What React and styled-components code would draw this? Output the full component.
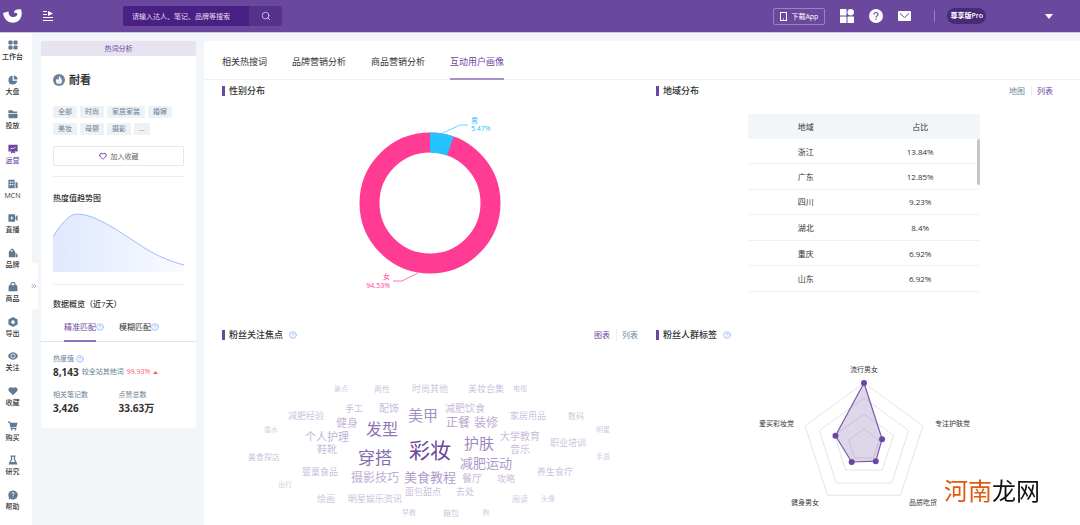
import React, { useState } from "react";
import styled, { createGlobalStyle } from "styled-components";
import { ChevronsRight, CircleHelp, Heart, Search } from "lucide-react";

const navItems = [
  { label: "工作台", icon: "grid" },
  { label: "大盘", icon: "pie" },
  { label: "投放", icon: "folder" },
  { label: "运营", icon: "board" },
  { label: "MCN", icon: "building" },
  { label: "直播", icon: "video" },
  { label: "品牌", icon: "tag" },
  { label: "商品", icon: "bag" },
  { label: "导出", icon: "hex" },
  { label: "关注", icon: "eye" },
  { label: "收藏", icon: "heart" },
  { label: "购买", icon: "cart" },
  { label: "研究", icon: "flask" },
  { label: "帮助", icon: "help" },
];

const icons = {
  grid: (
    <>
      <rect x="1" y="1" width="10" height="10" rx="3" />
      <rect x="13" y="1" width="10" height="10" rx="3" />
      <rect x="1" y="13" width="10" height="10" rx="3" />
      <rect x="13" y="13" width="10" height="10" rx="3" />
    </>
  ),
  pie: (
    <>
      <path d="M11 2a10.500 10.500 0 1 0 11 12H11z" />
      <path d="M14 1v10h9A10 10 0 0 0 14 1z" />
    </>
  ),
  folder: (
    <>
      <path d="M1 3h9l3 3h9v4H1z" />
      <path d="M1 12h22v8a2 2 0 0 1-2 2H3a2 2 0 0 1-2-2z" />
    </>
  ),
  board: (
    <>
      <path d="M1 2h22v16h-8l3 4h-4l-2-2-2 2H6l3-4H1z" />
      <path d="M6 13l4-4 3 3 5-5" fill="none" stroke="#fff" strokeWidth="2" />
    </>
  ),
  building: (
    <>
      <path
        fillRule="evenodd"
        d="M1 2h15v20H1zM4 6v3h4V6zm6 0v3h3V6zM4 12v3h4v-3zm6 0v3h3v-3z"
      />
      <path d="M18 8h5v14h-5z" />
    </>
  ),
  video: (
    <>
      <path fillRule="evenodd" d="M1 3h16v18H1zM7 8v8l6-4z" />
      <path d="M18 9l5-4v14l-5-4z" />
    </>
  ),
  tag: (
    <>
      <path
        fillRule="evenodd"
        d="M2 9l6-7h4l5 7v13H2zM9 5a2 2 0 1 0 .1 0z"
      />
      <path d="M18 10l5 7v5h-5z" />
    </>
  ),
  bag: (
    <>
      <path d="M2 8h20l1 14H1z" />
      <path d="M7 12V6a5 5 0 0 1 10 0v6" fill="none" stroke="currentColor" strokeWidth="3" />
    </>
  ),
  hex: <path fillRule="evenodd" d="M12 0l11 6v12l-11 6-11-6V6zM12 7l-4 3v5l4 2 4-2v-5z" />,
  eye: (
    <>
      <path d="M0 12C5 0 19 0 24 12 19 24 5 24 0 12z" />
      <circle cx="12" cy="12" r="5" fill="none" stroke="#fff" strokeWidth="2" />
    </>
  ),
  heart: <path d="M12 22L2 12C-2 6 6-1 12 5c6-6 14 1 10 7z" />,
  cart: (
    <>
      <path d="M0 1h5l1 3h17l-3 11H8l1 2h11v2H7L3 4H0z" />
      <circle cx="9" cy="21" r="2" />
      <circle cx="18" cy="21" r="2" />
    </>
  ),
  flask: <path fillRule="evenodd" d="M6 1h12v3h-1v6l6 13H1L7 10V4H6zM10 4v7l-3 6h10l-3-6V4z" />,
  help: (
    <>
      <path d="M12 1a11 11 0 1 1-6 20l-4 2v-6A11 11 0 0 1 12 1z" />
      <path
        d="M9 9c0-4 6-4 6 0 0 2-3 2-3 5m0 2v2"
        fill="none"
        stroke="#fff"
        strokeWidth="2"
      />
    </>
  ),
};

const tags = ["全部", "时尚", "家居家装", "婚嫁", "美妆", "母婴", "摄影", "..."];
const pageTabs = ["相关热搜词", "品牌营销分析", "商品营销分析", "互动用户画像"];

const regions = [
  ["浙江", "13.84%"],
  ["广东", "12.85%"],
  ["四川", "9.23%"],
  ["湖北", "8.4%"],
  ["重庆", "6.92%"],
  ["山东", "6.92%"],
];

// word, x, y, size, opacity
const words = [
  ["景点", 119, 46, 7, 0.3],
  ["两性", 160, 46, 8, 0.32],
  ["时尚其他", 208, 46, 9, 0.32],
  ["美妆合集", 264, 46, 9, 0.34],
  ["电视", 298, 46, 7, 0.32],
  ["手工", 132, 66, 9, 0.35],
  ["配饰", 167, 66, 10, 0.38],
  ["美甲", 201, 73, 15, 0.6],
  ["减肥饮食", 243, 66, 10, 0.36],
  ["家居用品", 306, 73, 9, 0.34],
  ["数码", 354, 73, 8, 0.32],
  ["减肥经验", 84, 73, 9, 0.34],
  ["健身", 125, 80, 11, 0.4],
  ["发型", 160, 87, 16, 0.75],
  ["正餐", 236, 80, 12, 0.5],
  ["装修", 264, 80, 12, 0.45],
  ["香水", 49, 87, 7, 0.28],
  ["个人护理", 105, 94, 11, 0.42],
  ["大学教育", 298, 94, 10, 0.36],
  ["明星", 381, 87, 7, 0.3],
  ["鞋靴", 105, 107, 10, 0.36],
  ["彩妆", 208, 108, 21, 1],
  ["护肤", 257, 101, 15, 0.65],
  ["音乐", 298, 107, 10, 0.36],
  ["职业培训", 346, 100, 9, 0.34],
  ["穿搭", 153, 115, 17, 0.8],
  ["美食探店", 42, 114, 8, 0.32],
  ["减肥运动", 264, 121, 13, 0.55],
  ["手游", 381, 114, 7, 0.3],
  ["婴童食品", 98, 129, 9, 0.36],
  ["摄影技巧", 153, 135, 12, 0.45],
  ["美食教程", 208, 135, 13, 0.55],
  ["餐厅", 250, 136, 10, 0.38],
  ["攻略", 284, 136, 9, 0.36],
  ["养生食疗", 333, 129, 9, 0.34],
  ["出行", 63, 142, 7, 0.3],
  ["绘画", 104, 156, 9, 0.32],
  ["明星娱乐资讯", 153, 156, 9, 0.34],
  ["面包甜点", 201, 149, 9, 0.34],
  ["去处", 243, 149, 9, 0.34],
  ["阅读", 298, 156, 8, 0.32],
  ["头像", 326, 156, 7, 0.3],
  ["早教", 187, 170, 7, 0.3],
  ["箱包", 229, 170, 8, 0.32],
  ["狗", 264, 170, 7, 0.3],
];

const radarPoint = (i, r) => {
  const a = (i * 72 * Math.PI) / 180;
  return [208 + r * Math.sin(a), 103 - r * Math.cos(a)];
};
const radarLine = (values) => values.map((r, i) => radarPoint(i, r).join(",")).join(" ");
const radarValues = [62, 19, 20, 21, 30];

const NavIcon = ({ name }) => (
  <svg viewBox="0 0 24 24" width="10" height="10" fill="currentColor">
    {icons[name]}
  </svg>
);

const SectionTitle = ({ title, help, options, active, inset }) => (
  <SectionHead $inset={inset}>
    <h2>{title}</h2>
    {help && <HelpIcon size={8} />}
    {options && (
      <Toggle>
        {options.map((o) => (
          <button type="button" key={o} className={o === active ? "active" : ""}>
            {o}
          </button>
        ))}
      </Toggle>
    )}
  </SectionHead>
);

const TrendChart = () => (
  <TrendSvg viewBox="0 0 131 60" preserveAspectRatio="none">
    <defs>
      <linearGradient id="trend" x1="0" x2="1" y1="0" y2="0">
        <stop offset="0" stopColor="#dfe8fd" />
        <stop offset="1" stopColor="#fafbff" />
      </linearGradient>
    </defs>
    <path
      d="M0 25C8 11 16 4 21 2.500C28 1 38 4 48 9C60 15 70 22 84 31C98 41 115 49 131 53V60H0z"
      fill="url(#trend)"
    />
    <path
      d="M0 25C8 11 16 4 21 2.500C28 1 38 4 48 9C60 15 70 22 84 31C98 41 115 49 131 53"
      fill="none"
      stroke="#9dbcf9"
    />
  </TrendSvg>
);

const GenderChart = () => (
  <ChartSvg viewBox="0 0 416 220">
    <g fill="none" strokeWidth="20" transform="rotate(-90 208 105)">
      <circle cx="208" cy="105" r="60.500" stroke="#ff3b93" />
      <circle
        cx="208"
        cy="105"
        r="60.500"
        stroke="#23c3ff"
        pathLength="100"
        strokeDasharray="5.47 94.53"
      />
    </g>
    <path d="M221 35l17-8h8" fill="none" stroke="#23c3ff" strokeWidth="0.700" />
    <path d="M196 175l-16 8h-9" fill="none" stroke="#ff3b93" strokeWidth="0.700" />
    <g fontSize="7" fill="#23c3ff">
      <text x="249" y="25">男</text>
      <text x="249" y="33">5.47%</text>
    </g>
    <g fontSize="7" fill="#ff3b93" textAnchor="end">
      <text x="168" y="181">女</text>
      <text x="168" y="190">94.53%</text>
    </g>
  </ChartSvg>
);

const WordCloud = () => (
  <ChartSvg viewBox="0 0 416 182">
    <g fill="#6a479d" textAnchor="middle">
      {words.map(([word, x, y, size, opacity]) => (
        <text key={word} x={x} y={y} fontSize={size} opacity={opacity} dominantBaseline="central">
          {word}
        </text>
      ))}
    </g>
  </ChartSvg>
);

const RadarChart = () => (
  <ChartSvg viewBox="0 0 416 182">
    <g fill="none" stroke="#e4e4e4">
      {[62, 47, 31, 16].map((r) => (
        <polygon key={r} points={radarLine([r, r, r, r, r])} />
      ))}
    </g>
    <polygon
      points={radarLine(radarValues)}
      fill="#6b489f"
      fillOpacity="0.22"
      stroke="#7a59ad"
      strokeWidth="1.200"
    />
    {radarValues.map((r, i) => {
      const [x, y] = radarPoint(i, r);
      return <circle key={i} cx={x} cy={y} r="3" fill="#6b489f" />;
    })}
    <g fontSize="7" fill="#333" dominantBaseline="central">
      <text x="208" y="27" textAnchor="middle">流行男女</text>
      <text x="279" y="81">专注护肤党</text>
      <text x="253" y="160">品质吃货</text>
      <text x="163" y="160" textAnchor="end">健身男女</text>
      <text x="138" y="81" textAnchor="end">爱买彩妆党</text>
    </g>
  </ChartSvg>
);

const App = () => {
  const [tab, setTab] = useState("互动用户画像");

  return (
    <>
      <GlobalStyle />
      <Header>
        <Logo viewBox="0 0 20 14" width="20" height="14" aria-label="logo">
          <path
            d="M0 4L5.500 2.500C5.500 6.500 8 8.200 10.500 8C13 7.800 14.600 6 14.500 4.500L11 3.500C11 1 14 0 18 .3C20.500 8 16 13.700 10 13.700C4.500 13.700 1 10 0 4z"
            fill="#fff"
          />
        </Logo>
        <MenuButton type="button" aria-label="菜单">
          <svg viewBox="0 0 10 10" width="10" height="10" fill="#fff">
            <path d="M0 0h4v1H0zM0 3h4v1H0zM0 6h10v1H0zM0 9h10v1H0zM5 0l5 2.500L5 5z" />
          </svg>
        </MenuButton>
        <SearchBox>
          <input type="text" aria-label="搜索" placeholder="请输入达人、笔记、品牌等搜索" />
          <button type="button" aria-label="搜索">
            <Search size={10} />
          </button>
        </SearchBox>
        <HeaderRight>
          <DownloadButton type="button">
            <svg viewBox="0 0 7 9" width="7" height="9" fill="none" stroke="#fff">
              <rect x="0.500" y="0.500" width="6" height="8" />
              <path d="M3 7h1" />
            </svg>
            下载App
          </DownloadButton>
          <IconButton type="button" aria-label="应用">
            <svg viewBox="0 0 14 14" width="14" height="14" fill="#fff">
              <rect width="6.500" height="6.500" rx="0.500" />
              <circle cx="10.700" cy="3.300" r="3.200" />
              <rect y="7.500" width="6.500" height="6.500" rx="0.500" />
              <rect x="7.500" y="7.500" width="6.500" height="6.500" rx="0.500" />
            </svg>
          </IconButton>
          <IconButton type="button" aria-label="帮助">
            <svg viewBox="0 0 14 14" width="14" height="14">
              <circle cx="7" cy="7" r="7" fill="#fff" />
              <path
                d="M5 5.500c0-2.700 4-2.700 4 0 0 1.400-2 1.400-2 3m0 1v1.300"
                fill="none"
                stroke="#6a489e"
                strokeWidth="1.200"
              />
            </svg>
          </IconButton>
          <IconButton type="button" aria-label="消息">
            <svg viewBox="0 0 14 14" width="14" height="14">
              <rect y="2" width="13" height="10" rx="1" fill="#fff" />
              <path d="M2 4.500l4.500 4 4.500-4" fill="none" stroke="#6a489e" />
            </svg>
          </IconButton>
          <Divider />
          <Plan>尊享版Pro</Plan>
          <IconButton type="button" aria-label="账户">
            <svg viewBox="0 0 8 5" width="8" height="5" fill="#fff">
              <path d="M0 0h8L4 5z" />
            </svg>
          </IconButton>
        </HeaderRight>
      </Header>

      <Body>
        <Nav>
          {navItems.map((item) => (
            <a href="#" key={item.label} className={item.label === "运营" ? "active" : ""}>
              <NavIcon name={item.icon} />
              <span>{item.label}</span>
            </a>
          ))}
          <Collapse type="button" aria-label="展开">
            <ChevronsRight size={8} />
          </Collapse>
        </Nav>

        <Content>
          <Side>
            <Banner>热词分析</Banner>
            <SideBlock>
              <Keyword>
                <svg viewBox="0 0 24 24" width="12" height="12">
                  <circle cx="12" cy="12" r="12" fill="#6b8299" />
                  <path
                    d="M12 3c1 4 6 6 6 11a6 6 0 0 1-12 0c0-2 1-4 3-5 0 2 0 3 1 3 2-2 2-5 2-9z"
                    fill="#fff"
                  />
                  <path d="M12 13c1 2 3 3 2 6h-4c-1-2 1-3 2-6z" fill="#d5dde5" />
                </svg>
                <h1>耐看</h1>
              </Keyword>
              <Tags>
                {tags.map((t) => (
                  <span key={t}>{t}</span>
                ))}
              </Tags>
              <Favorite type="button">
                <Heart size={8} strokeWidth={3} />
                加入收藏
              </Favorite>
              <Line />
              <SideTitle $top={15}>热度值趋势图</SideTitle>
              <TrendChart />
              <Line />
              <SideTitle $top={13}>数据概览（近7天）</SideTitle>
            </SideBlock>
            <MatchTabs>
              <button type="button" className="active">
                <span>精准匹配</span>
                <HelpIcon size={8} />
              </button>
              <button type="button">
                <span>模糊匹配</span>
                <HelpIcon size={8} />
              </button>
            </MatchTabs>
            <Stats>
              <Stat $wide>
                <dt>
                  热度值 <HelpIcon size={8} />
                </dt>
                <dd>
                  8,143
                  <small>较全站其他词</small>
                  <Rise>99.93%</Rise>
                  <svg viewBox="0 0 5 3" width="5" height="3" fill="#ff5a5a">
                    <path d="M0 3L2.500 0 5 3z" />
                  </svg>
                </dd>
              </Stat>
              <Stat>
                <dt>相关笔记数</dt>
                <dd>3,426</dd>
              </Stat>
              <Stat>
                <dt>点赞总数</dt>
                <dd>33.63万</dd>
              </Stat>
            </Stats>
          </Side>

          <Main>
            <PageTabs>
              {pageTabs.map((t) => (
                <button
                  type="button"
                  key={t}
                  className={t === tab ? "active" : ""}
                  onClick={() => setTab(t)}
                >
                  {t}
                </button>
              ))}
            </PageTabs>
            <Sections>
              <section>
                <SectionTitle title="性别分布" />
                <GenderChart />
              </section>
              <section>
                <SectionTitle title="地域分布" options={["地图", "列表"]} active="列表" inset />
                <TableWrap>
                  <Table>
                    <thead>
                      <tr>
                        <th>地域</th>
                        <th>占比</th>
                      </tr>
                    </thead>
                    <tbody>
                      {regions.map(([name, share]) => (
                        <tr key={name}>
                          <td>{name}</td>
                          <td>{share}</td>
                        </tr>
                      ))}
                    </tbody>
                  </Table>
                  <Thumb />
                </TableWrap>
              </section>
              <section>
                <SectionTitle title="粉丝关注焦点" help options={["图表", "列表"]} active="图表" />
                <WordCloud />
              </section>
              <section>
                <SectionTitle title="粉丝人群标签" help />
                <RadarChart />
              </section>
            </Sections>
          </Main>
        </Content>
      </Body>
      <Watermark>
        <span>河南</span>龙网
      </Watermark>
    </>
  );
};

const GlobalStyle = createGlobalStyle`
  * {
    box-sizing: border-box;
    margin: 0;
    padding: 0;
  }
  body {
    font-family: "Open Sans", "Noto Sans CJK SC", sans-serif;
    font-size: 8px;
    color: #333;
    background: #f3f6f9;
  }
  #root {
    display: flex;
    flex-direction: column;
    min-height: 100vh;
  }
  button, input {
    font: inherit;
    color: inherit;
    border: none;
    background: none;
  }
  button {
    cursor: pointer;
  }
  svg {
    flex: none;
  }
`;

const HelpIcon = styled(CircleHelp)`
  color: #82a7f8;
`;

const Header = styled.header`
  display: flex;
  align-items: center;
  flex: none;
  height: 33px;
  padding: 0 27px 0 3px;
  background: #6a489e;
  border-bottom: 1px solid #cfc6e2;
  color: #fff;
`;

const Logo = styled.svg`
  display: block;
`;

const MenuButton = styled.button`
  display: flex;
  margin-left: 20px;
`;

const SearchBox = styled.div`
  display: flex;
  height: 20px;
  margin-left: 70px;
  border-radius: 2px;
  overflow: hidden;
  font-size: 7px;

  input {
    width: 126px;
    padding: 0 9px;
    background: #4a2085;
    outline: none;
    &::placeholder {
      color: #e3dcee;
      opacity: 1;
    }
  }
  button {
    display: flex;
    align-items: center;
    justify-content: center;
    width: 33px;
    background: #56328c;
    color: #d8cfe6;
  }
`;

const HeaderRight = styled.div`
  display: flex;
  align-items: center;
  margin-left: auto;
`;

const DownloadButton = styled.button`
  display: flex;
  align-items: center;
  gap: 4px;
  height: 17px;
  padding: 0 6px;
  border: 1px solid #9a82c0;
  border-radius: 2px;
  font-size: 7px;
`;

const IconButton = styled.button`
  display: flex;
  margin-left: 15px;
`;

const Divider = styled.span`
  width: 1px;
  height: 12px;
  margin: 0 12px 0 22px;
  background: #9a82c0;
`;

const Plan = styled.span`
  height: 16px;
  margin-right: 44px;
  padding: 0 3px;
  border-radius: 8px;
  background: #482a7a;
  font-size: 7px;
  font-weight: 600;
  line-height: 16px;
`;

const Body = styled.div`
  display: flex;
  flex: 1;
`;

const Nav = styled.nav`
  position: relative;
  display: flex;
  flex-direction: column;
  flex: none;
  width: 32px;
  padding: 1px 0 7px;
  background: #fff;

  a {
    display: flex;
    flex: 1;
    flex-direction: column;
    align-items: center;
    justify-content: center;
    gap: 2px;
    padding-right: 7px;
    color: #5f7a93;
    font-size: 7px;
    font-weight: 500;
    line-height: 10px;
    text-decoration: none;
    white-space: nowrap;
    span {
      color: #333;
    }
    &.active,
    &.active span {
      color: #6b47a3;
    }
  }
`;

const Collapse = styled.button`
  position: absolute;
  top: 230px;
  left: 30px;
  display: flex;
  align-items: center;
  width: 8px;
  height: 46px;
  border-radius: 0 2px 2px 0;
  background: #fff;
  color: #8a6dbb;
`;

const Content = styled.div`
  display: flex;
  flex: 1;
  gap: 8px;
  min-width: 0;
  padding: 8px 0 0 9px;
`;

const Side = styled.aside`
  flex: none;
  align-self: flex-start;
  width: 155px;
  border-radius: 2px;
  background: #fff;
  overflow: hidden;
`;

const Banner = styled.div`
  background: #e8e3f1;
  color: #6b47a3;
  font-size: 7px;
  line-height: 15px;
  text-align: center;
`;

const SideBlock = styled.div`
  padding: 16px 12px 0;
`;

const Keyword = styled.div`
  display: flex;
  align-items: center;
  gap: 4px;
  h1 {
    font-size: 11px;
    font-weight: 700;
    line-height: 16px;
  }
`;

const Tags = styled.div`
  display: flex;
  flex-wrap: wrap;
  gap: 5px 3px;
  margin-top: 18px;
  span {
    padding: 0 5px;
    border-radius: 1px;
    background: #eef2f5;
    color: #667e95;
    font-size: 7px;
    line-height: 12px;
  }
`;

const Favorite = styled.button`
  display: flex;
  align-items: center;
  justify-content: center;
  gap: 4px;
  width: 100%;
  height: 20px;
  margin: 11px 0 10px;
  border: 1px solid #e6e6ec;
  border-radius: 2px;
  color: #666;
  font-size: 7px;
  svg {
    color: #6b47a3;
  }
`;

const Line = styled.hr`
  height: 1px;
  border: none;
  background: #ebeef2;
`;

const SideTitle = styled.h3`
  margin-top: ${(p) => p.$top}px;
  font-size: 8px;
  font-weight: 500;
  line-height: 12px;
`;

const TrendSvg = styled.svg`
  display: block;
  width: 100%;
  height: 60px;
  margin: 8px 0 12px;
`;

const MatchTabs = styled.div`
  display: flex;
  gap: 15px;
  margin-top: 8px;
  padding-left: 23px;
  border-bottom: 1px solid #e3dfee;
  button {
    display: flex;
    align-items: center;
    margin-bottom: -1px;
    line-height: 18px;
    span {
      padding-bottom: 4px;
      border-bottom: 2px solid transparent;
    }
    svg {
      margin-bottom: 6px;
    }
  }
  .active span {
    border-color: #8d6fbd;
    color: #6b47a3;
  }
`;

const Stats = styled.dl`
  display: grid;
  grid-template-columns: 1fr 1fr;
  row-gap: 10px;
  padding: 11px 12px 13px;
`;

const Stat = styled.div`
  grid-column: ${(p) => (p.$wide ? "1 / -1" : "auto")};
  dt {
    display: flex;
    align-items: center;
    gap: 2px;
    color: #667e95;
    font-size: 7px;
    line-height: 12px;
  }
  dd {
    display: flex;
    align-items: center;
    gap: 3px;
    font-size: 10px;
    font-weight: 700;
    line-height: 14px;
  }
  small {
    color: #667e95;
    font-size: 7px;
    font-weight: 400;
  }
`;

const Rise = styled.span`
  color: #ff5a5a;
  font-size: 7px;
  font-weight: 400;
`;

const Main = styled.main`
  flex: 1;
  min-width: 0;
  background: #fff;
`;

const PageTabs = styled.div`
  display: flex;
  gap: 25px;
  padding: 0 18px;
  border-bottom: 1px solid #eef1f5;
  button {
    margin-bottom: -1px;
    padding: 5px 0 0;
    border-bottom: 2px solid transparent;
    font-size: 9px;
    line-height: 32px;
  }
  .active {
    border-color: #a890d0;
    color: #6b47a3;
  }
`;

const Sections = styled.div`
  display: grid;
  grid-template-columns: 1fr 1fr;
  grid-template-rows: minmax(244px, auto) auto;
  column-gap: 18px;
  padding: 0 8px 0 18px;
`;

const SectionHead = styled.div`
  display: flex;
  align-items: center;
  gap: 6px;
  padding: 4px ${(p) => (p.$inset ? 19 : 0)}px 0 0;
  line-height: 14px;
  h2 {
    display: flex;
    align-items: center;
    gap: 4px;
    font-size: 9px;
    font-weight: 500;
    &::before {
      content: "";
      width: 3px;
      height: 10px;
      background: #6b47a3;
    }
  }
`;

const Toggle = styled.div`
  display: flex;
  margin-left: auto;
  button {
    color: #6d8aa3;
    line-height: 12px;
    & + button {
      margin-left: 6px;
      padding-left: 5px;
      border-left: 1px solid #eceff3;
    }
  }
  .active {
    color: #6b47a3;
  }
`;

const ChartSvg = styled.svg`
  display: block;
  width: 100%;
`;

const TableWrap = styled.div`
  position: relative;
  width: 56%;
  margin: 16px auto 0;
`;

const Table = styled.table`
  width: 100%;
  height: 178px;
  table-layout: fixed;
  border-collapse: collapse;
  text-align: center;
  th {
    height: 25px;
    background: #f3f6f9;
    font-weight: 400;
  }
  td {
    border-bottom: 1px solid #eff1f6;
  }
  th:last-child,
  td:last-child {
    padding-right: 4px;
  }
`;

const Thumb = styled.span`
  position: absolute;
  top: 25px;
  right: 0;
  width: 3px;
  height: 46px;
  border-radius: 2px;
  background: #c3c6cb;
`;

const Watermark = styled.div`
  position: fixed;
  right: 40px;
  bottom: 16px;
  color: #111;
  font-size: 24px;
  line-height: 36px;
  span {
    color: #e2590f;
  }
`;

export default App;
